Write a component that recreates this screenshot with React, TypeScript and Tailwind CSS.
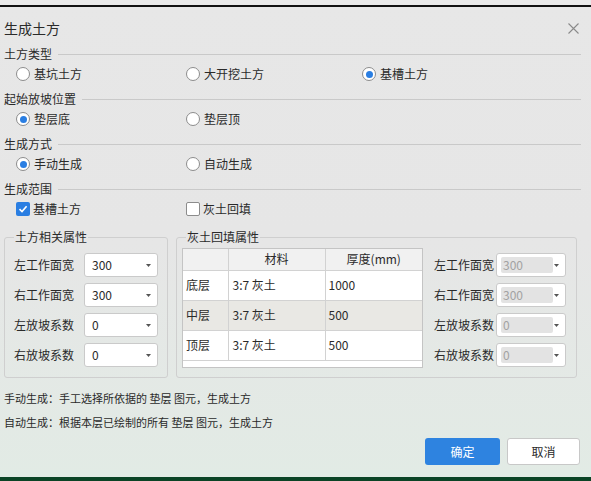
import type { ReactNode } from "react";

const font = "font-['Noto_Sans_CJK_SC','Noto_Sans',sans-serif]";

function Radio({ checked = false, children }: { checked?: boolean; children: ReactNode }) {
    return (
        <label className="flex items-center gap-[4px]">
            <span className="flex h-[14px] w-[14px] items-center justify-center rounded-full border border-[#8c8c8c] bg-white">
                {checked && <span className="h-[7px] w-[7px] rounded-full bg-[#2a7ee2]" />}
            </span>
            <span>{children}</span>
        </label>
    );
}

function Checkbox({ checked = false, children }: { checked?: boolean; children: ReactNode }) {
    return (
        <label className="flex items-center gap-[3px]">
            {checked ? (
                <span className="flex h-[14px] w-[14px] items-center justify-center rounded-[2px] bg-[#2a7ee2]">
                    <svg width="10" height="10" viewBox="0 0 10 10" fill="none">
                        <path d="M1.5 5.2 L4 7.6 L8.6 2.2" stroke="white" strokeWidth="1.6" />
                    </svg>
                </span>
            ) : (
                <span className="h-[14px] w-[14px] rounded-[2px] border border-[#8c8c8c] bg-white" />
            )}
            <span>{children}</span>
        </label>
    );
}

function Section({ title }: { title: string }) {
    return (
        <div className="flex h-[20px] items-center gap-[6px]">
            <span>{title}</span>
            <span className="h-px flex-1 bg-[#c9c9c9]" />
        </div>
    );
}

function Arrow() {
    return (
        <svg width="5" height="3" viewBox="0 0 5 3">
            <path d="M0 0 H5 L2.5 3 Z" fill="#555" />
        </svg>
    );
}

function Select({ value, width }: { value: string; width: string }) {
    return (
        <div className={`flex h-[24px] ${width} items-center justify-between rounded-[3px] border border-[#cacaca] bg-white pl-[7px] pr-[6px]`}>
            <span>{value}</span>
            <Arrow />
        </div>
    );
}

function DisabledSelect({ value }: { value: string }) {
    return (
        <div className="flex h-[24px] w-[70px] items-center rounded-[3px] border border-[#cacaca] bg-white py-[3px] pl-[4px] pr-[6px]">
            <div className="flex h-full w-[52px] items-center rounded-[2px] bg-[#e3e3e3] pl-[2px] text-[#a2a2a2]">{value}</div>
            <span className="ml-auto">
                <Arrow />
            </span>
        </div>
    );
}

const rows = [
    { label: "左工作面宽", value: "300" },
    { label: "右工作面宽", value: "300" },
    { label: "左放坡系数", value: "0" },
    { label: "右放坡系数", value: "0" },
];

const layers = [
    { name: "底层", mat: "3:7 灰土", depth: "1000", bg: "bg-white" },
    { name: "中层", mat: "3:7 灰土", depth: "500", bg: "bg-[#e9e8e4]" },
    { name: "顶层", mat: "3:7 灰土", depth: "500", bg: "bg-white" },
];

export default function App() {
    return (
        <div className={`${font} flex h-[481px] w-[591px] flex-col overflow-hidden bg-[#0b4426] text-[12px] text-[#2a2a2a]`}>
            <div className="h-[5px] bg-[#e9e9e9]" />
            <div className="h-[2px] bg-[#111]" />

            <div className="flex flex-col bg-linear-to-b from-[#e7e7e7] via-[#e6e6e6] to-[#e2ebe5] pb-[12px]">
                <div className="flex h-[37px] items-center justify-between pl-[4px] pr-[12px] pt-[5px]">
                    <span className="text-[14px]">生成土方</span>
                    <svg width="11" height="11" viewBox="0 0 11 11">
                        <path d="M0.5 0.5 L10.5 10.5 M10.5 0.5 L0.5 10.5" stroke="#8a8a8a" strokeWidth="1.1" />
                    </svg>
                </div>

                <div className="flex flex-col pl-[4px] pr-[10px]">
                    <Section title="土方类型" />
                    <div className="mb-[5px] flex h-[20px] items-center pl-[12px]">
                        <div className="w-[170px]">
                            <Radio>基坑土方</Radio>
                        </div>
                        <div className="w-[176px]">
                            <Radio>大开挖土方</Radio>
                        </div>
                        <Radio checked>基槽土方</Radio>
                    </div>

                    <Section title="起始放坡位置" />
                    <div className="mb-[5px] flex h-[20px] items-center pl-[12px]">
                        <div className="w-[170px]">
                            <Radio checked>垫层底</Radio>
                        </div>
                        <Radio>垫层顶</Radio>
                    </div>

                    <Section title="生成方式" />
                    <div className="mb-[5px] flex h-[20px] items-center pl-[12px]">
                        <div className="w-[170px]">
                            <Radio checked>手动生成</Radio>
                        </div>
                        <Radio>自动生成</Radio>
                    </div>

                    <Section title="生成范围" />
                    <div className="flex h-[20px] items-center pl-[12px]">
                        <div className="w-[170px]">
                            <Checkbox checked>基槽土方</Checkbox>
                        </div>
                        <Checkbox>灰土回填</Checkbox>
                    </div>

                    <div className="mt-[10px] flex gap-[8px]">
                        <fieldset className="w-[164px] rounded-[3px] border border-[#cfcfcf] pb-[9px] pl-[9px] pr-[9px] pt-[8px]">
                            <legend className="px-[1px] leading-[16px]">土方相关属性</legend>
                            <div className="flex flex-col gap-[6px]">
                                {rows.map((r) => (
                                    <div key={r.label} className="flex items-center">
                                        <span className="w-[70px]">{r.label}</span>
                                        <Select value={r.value} width="w-[74px]" />
                                    </div>
                                ))}
                            </div>
                        </fieldset>

                        <fieldset className="w-[401px] rounded-[3px] border border-[#cfcfcf] pb-[9px] pl-[5px] pr-[10px] pt-[3px]">
                            <legend className="ml-[4px] px-[1px] leading-[16px]">灰土回填属性</legend>
                            <div className="flex items-start">
                                <div className="h-[120px] w-[241px] border border-[#c4c4c4] bg-white">
                                    <table className="w-full border-collapse">
                                        <thead>
                                            <tr className="h-[21px] bg-[#f1f1f1]">
                                                <th className="w-[45px] border-b border-r border-[#d2d2d2] font-normal" />
                                                <th className="w-[97px] border-b border-r border-[#d2d2d2] font-normal">材料</th>
                                                <th className="border-b border-[#d2d2d2] font-normal">厚度(mm)</th>
                                            </tr>
                                        </thead>
                                        <tbody>
                                            {layers.map((l) => (
                                                <tr key={l.name} className={`h-[30px] ${l.bg}`}>
                                                    <td className="border-b border-r border-[#d2d2d2] pl-[3px]">{l.name}</td>
                                                    <td className="border-b border-r border-[#d2d2d2] pl-[4px]">{l.mat}</td>
                                                    <td className="border-b border-[#d2d2d2] pl-[3px]">{l.depth}</td>
                                                </tr>
                                            ))}
                                        </tbody>
                                    </table>
                                </div>
                                <div className="ml-[11px] mt-[5px] flex flex-col gap-[6px]">
                                    {rows.map((r) => (
                                        <div key={r.label} className="flex items-center">
                                            <span className="w-[62px]">{r.label}</span>
                                            <DisabledSelect value={r.value} />
                                        </div>
                                    ))}
                                </div>
                            </div>
                        </fieldset>
                    </div>

                    <div className="mt-[8px] text-[11px] leading-[24px]">手动生成：手工选择所依据的 垫层 图元，生成土方</div>
                    <div className="text-[11px] leading-[24px]">自动生成：根据本层已绘制的所有 垫层 图元，生成土方</div>

                    <div className="mt-[4px] flex justify-end gap-[7px] pr-[1px]">
                        <button className="flex h-[27px] w-[75px] items-center justify-center rounded-[3px] bg-[#2e83e0] text-white">确定</button>
                        <button className="flex h-[27px] w-[73px] items-center justify-center rounded-[3px] border border-[#c8c8c8] bg-white">取消</button>
                    </div>
                </div>
            </div>

            <div className="flex-1 bg-[#0b4426]" />
        </div>
    );
}
